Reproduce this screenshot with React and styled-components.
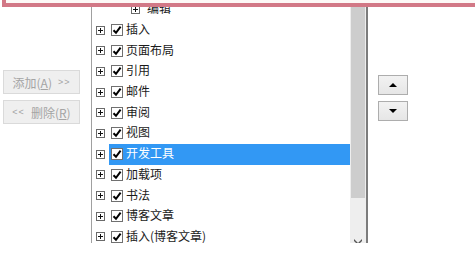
import React from "react";
import styled, { createGlobalStyle } from "styled-components";

const GlobalStyle = createGlobalStyle`
  html, body {
    margin: 0;
    padding: 0;
    background: #ffffff;
  }
  body {
    font-family: "Noto Sans CJK SC", "Liberation Sans", sans-serif;
  }
`;

const Page = styled.div`
  position: relative;
  width: 475px;
  height: 260px;
  overflow: hidden;
  background: #ffffff;
`;

const Body = styled.div`
  display: flex;
  align-items: flex-start;
`;

const LeftPanel = styled.div`
  width: 88px;
  padding: 70px 0 0 3px;
  display: flex;
  flex-direction: column;
  gap: 6px;
`;

const MoveButton = styled.div`
  width: 77px;
  height: 24px;
  box-sizing: border-box;
  border: 1px solid #dadada;
  background: #efefef;
  color: #a4a4a4;
  font-size: 12px;
  display: flex;
  align-items: center;
  justify-content: center;
  gap: 6px;
  white-space: nowrap;
  u {
    text-decoration: underline;
  }
`;

const Arrows = styled.span`
  font-family: "Liberation Sans", sans-serif;
  font-size: 9px;
  letter-spacing: 1px;
`;

const ListBox = styled.div`
  width: 277px;
  height: 243px;
  box-sizing: border-box;
  border-left: 1px solid #a0a0a0;
  border-right: 2px solid #7c7c7c;
  display: flex;
  overflow: hidden;
`;

const Rows = styled.div`
  flex: 1;
  margin-top: -1px;
`;

const Row = styled.div`
  height: 20.7px;
  display: flex;
  align-items: center;
  padding-left: ${(p) => (p.$child ? 39 : 4)}px;
`;

const Expander = styled.span`
  position: relative;
  width: 9px;
  height: 9px;
  box-sizing: border-box;
  border: 1px solid #6a6a6a;
  background: #fff;
  flex: none;
  &::before,
  &::after {
    content: "";
    position: absolute;
    background: #111;
  }
  &::before {
    left: 1px;
    right: 1px;
    top: 3px;
    height: 1px;
  }
  &::after {
    top: 1px;
    bottom: 1px;
    left: 3px;
    width: 1px;
  }
`;

const Item = styled.div`
  flex: 1;
  height: 100%;
  margin-left: ${(p) => (p.$child ? 5 : 4)}px;
  padding-left: 2px;
  display: flex;
  align-items: center;
  gap: 3px;
  background: ${(p) => (p.$selected ? "#3298f4" : "transparent")};
  color: ${(p) => (p.$selected ? "#ffffff" : "#1a1a1a")};
  font-size: 12px;
  white-space: nowrap;
`;

const Check = styled.span`
  width: 12px;
  height: 12px;
  box-sizing: border-box;
  border: 1px solid #707070;
  background: #ffffff;
  display: flex;
  align-items: center;
  justify-content: center;
  flex: none;
`;

const Label = styled.span`
  line-height: 1;
  margin-top: -2px;
`;

const Scrollbar = styled.div`
  width: 16px;
  height: 100%;
  background: #eeeeee;
  position: relative;
  flex: none;
`;

const Thumb = styled.div`
  height: 198px;
  background: #cdcdcd;
  margin: 0 1px;
`;

const DownArrow = styled.svg`
  position: absolute;
  left: 4px;
  bottom: -2px;
`;

const RightPanel = styled.div`
  padding: 75px 0 0 10px;
  display: flex;
  flex-direction: column;
  gap: 6px;
`;

const OrderButton = styled.div`
  width: 30px;
  height: 20px;
  box-sizing: border-box;
  border: 1px solid #adadad;
  background: linear-gradient(#f2f2f2, #e6e6e6);
  display: flex;
  align-items: center;
  justify-content: center;
`;

const Triangle = styled.span`
  width: 0;
  height: 0;
  border-left: 4px solid transparent;
  border-right: 4px solid transparent;
  ${(p) =>
    p.$up
      ? "border-bottom: 4px solid #000;"
      : "border-top: 4px solid #000;"}
`;

const Annotation = styled.div`
  position: absolute;
  left: 2px;
  right: -10px;
  top: -40px;
  height: 47px;
  box-sizing: border-box;
  border: 4px solid #d27886;
  background: #fdf8f6;
`;

const tabs = [
  "插入",
  "页面布局",
  "引用",
  "邮件",
  "审阅",
  "视图",
  "开发工具",
  "加载项",
  "书法",
  "博客文章",
  "插入(博客文章)",
];

const CheckMark = () => (
  <svg width="10" height="10" viewBox="0 0 10 10">
    <path d="M1.5 5.2 L4 7.8 L8.6 1.6" fill="none" stroke="#000" strokeWidth="2" />
  </svg>
);

const App = () => {
  return (
    <Page>
      <GlobalStyle />
      <Body>
        <LeftPanel>
          <MoveButton>
            <span>
              添加(<u>A</u>)
            </span>
            <Arrows>&gt;&gt;</Arrows>
          </MoveButton>
          <MoveButton>
            <Arrows>&lt;&lt;</Arrows>
            <span>
              删除(<u>R</u>)
            </span>
          </MoveButton>
        </LeftPanel>

        <ListBox>
          <Rows>
            <Row $child>
              <Expander />
              <Item $child>
                <Label>编辑</Label>
              </Item>
            </Row>
            {tabs.map((name) => (
              <Row key={name}>
                <Expander />
                <Item $selected={name === "开发工具"}>
                  <Check>
                    <CheckMark />
                  </Check>
                  <Label>{name}</Label>
                </Item>
              </Row>
            ))}
          </Rows>
          <Scrollbar>
            <Thumb />
            <DownArrow width="8" height="6" viewBox="0 0 8 6">
              <path d="M0 0 L4 4 L8 0 L8 2 L4 6 L0 2 Z" fill="#555" />
            </DownArrow>
          </Scrollbar>
        </ListBox>

        <RightPanel>
          <OrderButton>
            <Triangle $up />
          </OrderButton>
          <OrderButton>
            <Triangle />
          </OrderButton>
        </RightPanel>
      </Body>
      <Annotation />
    </Page>
  );
};

export default App;
